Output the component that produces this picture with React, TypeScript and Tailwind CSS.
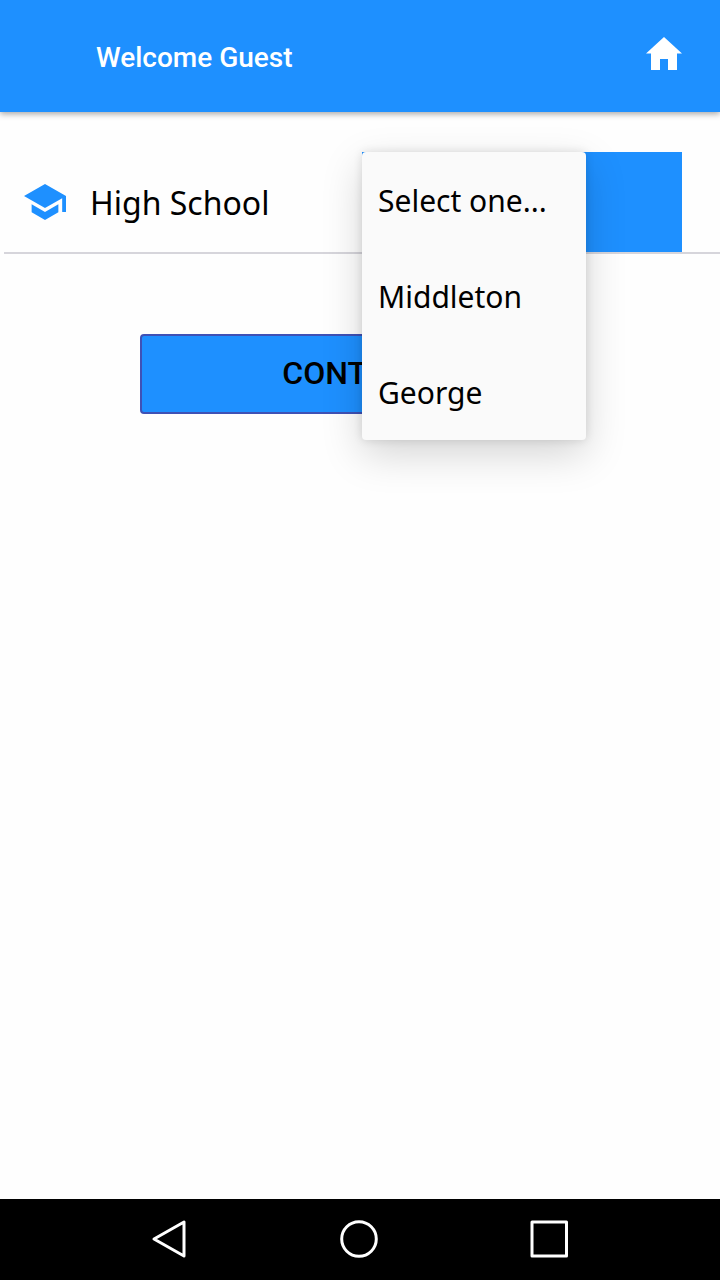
import { useState } from "react";

const schools = ["Select one...", "Middleton", "George"];

function HomeIcon() {
  return (
    <svg className="h-[33px] w-9" viewBox="0 0 36 33" fill="currentColor" aria-hidden="true">
      <path d="M18 0L36 16.5H31V33H22V22H14V33H5V16.5H0Z" />
    </svg>
  );
}

function SchoolIcon() {
  return (
    <svg
      className="h-9 w-[42px] shrink-0 text-[#1e90ff]"
      viewBox="1 3 22 18"
      preserveAspectRatio="none"
      fill="currentColor"
      aria-hidden="true"
    >
      <path d="M5 13.18v4L12 21l7-3.82v-4L12 17l-7-3.82zM12 3L1 9l11 6 9-4.91V17h2V9L12 3z" />
    </svg>
  );
}

function Header() {
  return (
    <header className="flex h-28 items-center justify-between bg-[#1e90ff] pr-[38px] pl-24 text-white shadow-[0_2px_6px_rgba(0,0,0,0.35)]">
      <h1 className="pt-1 font-['Roboto',sans-serif] text-[28px] leading-9 font-medium">Welcome Guest</h1>
      <button type="button" aria-label="Home" className="pb-1.5">
        <HomeIcon />
      </button>
    </header>
  );
}

function SchoolField() {
  const [school, setSchool] = useState(schools[0]);
  const [open, setOpen] = useState(true);

  const choose = (name: string) => {
    setSchool(name);
    setOpen(false);
  };

  return (
    <div className="ml-1 flex h-[102px] items-center justify-between border-b-2 border-[#d6d5db] pr-[38px] pl-5">
      <label
        htmlFor="school"
        className="flex items-center gap-6 font-['Noto_Sans',sans-serif] text-[32px] leading-10 text-black"
      >
        <SchoolIcon />
        <span className="pt-0.5">High School</span>
      </label>
      <div className="relative h-full w-80">
        <select
          id="school"
          value={school}
          onChange={(e) => setSchool(e.target.value)}
          className="h-full w-full appearance-none bg-[#1e90ff] px-4 font-['Noto_Sans',sans-serif] text-[30px] text-black"
        >
          {schools.map((name) => (
            <option key={name}>{name}</option>
          ))}
        </select>
        {open && (
          <ul className="absolute top-0 left-0 z-10 w-56 rounded bg-[#fafafa] shadow-[0_14px_40px_rgba(0,0,0,0.17),0_0_10px_rgba(0,0,0,0.12)]">
            {schools.map((name) => (
              <li key={name}>
                <button
                  type="button"
                  onClick={() => choose(name)}
                  className="flex h-24 w-full items-center px-4 pt-0.5 font-['Noto_Sans',sans-serif] text-[30px] leading-10 text-black"
                >
                  {name}
                </button>
              </li>
            ))}
          </ul>
        )}
      </div>
    </div>
  );
}

function NavigationBar() {
  return (
    <nav className="flex h-[81px] items-center justify-center bg-black pr-0.5 pb-0.5 text-white">
      <button type="button" aria-label="Back" className="flex w-[190px] justify-center">
        <svg className="h-10 w-10" viewBox="0 0 40 40" fill="none" stroke="currentColor" strokeWidth="3" strokeLinejoin="round" aria-hidden="true">
          <path d="M35 3V37L5 20Z" />
        </svg>
      </button>
      <button type="button" aria-label="Home screen" className="flex w-[190px] justify-center">
        <svg className="h-10 w-10" viewBox="0 0 40 40" fill="none" stroke="currentColor" strokeWidth="3" aria-hidden="true">
          <circle cx="20" cy="20" r="17.3" />
        </svg>
      </button>
      <button type="button" aria-label="Recent apps" className="flex w-[190px] justify-center">
        <svg className="h-10 w-10" viewBox="0 0 40 40" fill="none" stroke="currentColor" strokeWidth="3" strokeLinejoin="round" aria-hidden="true">
          <path d="M3 3H37.5V37H3Z" />
        </svg>
      </button>
    </nav>
  );
}

export default function App() {
  return (
    <div className="flex min-h-screen flex-col bg-[#fefefe]">
      <Header />
      <main className="flex-1 pt-10">
        <SchoolField />
        <div className="px-[140px] pt-20">
          <button
            type="button"
            className="h-20 w-full rounded border-2 border-[#3f51b5] bg-[#1e90ff] pb-0.5 font-['Roboto',sans-serif] text-[32px] leading-10 font-medium text-black"
          >
            CONTINUE
          </button>
        </div>
      </main>
      <NavigationBar />
    </div>
  );
}
